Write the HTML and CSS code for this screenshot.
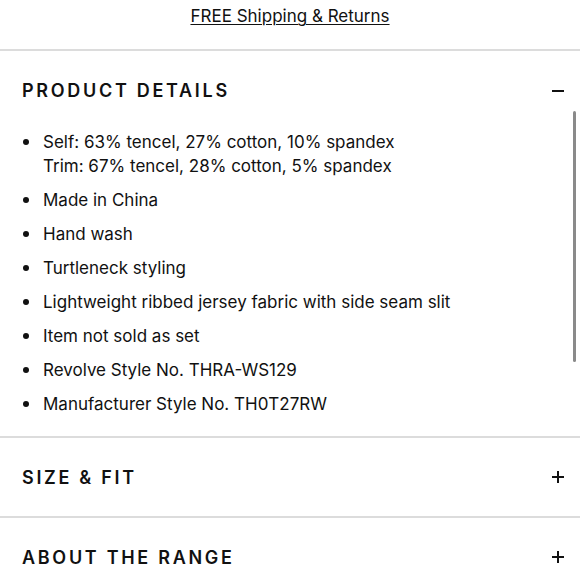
FILE: index.html
```html
<!DOCTYPE html>
<html lang="en">
<head>
  <meta charset="UTF-8" />
  <meta name="viewport" content="width=device-width, initial-scale=1.0" />
  <title>Product Details</title>
  <link rel="stylesheet" href="styles.css">
</head>
<body>

<div class="shipping">
  <a href="#">FREE Shipping &amp; Returns</a>
</div>

<section class="panel open">
  <div class="panel-head">
    <h2>PRODUCT DETAILS</h2>
    <span class="toggle minus"></span>
  </div>
  <ul class="details">
    <li>Self: 63% tencel, 27% cotton, 10% spandex<br>Trim: 67% tencel, 28% cotton, 5% spandex</li>
    <li>Made in China</li>
    <li>Hand wash</li>
    <li>Turtleneck styling</li>
    <li>Lightweight ribbed jersey fabric with side seam slit</li>
    <li>Item not sold as set</li>
    <li>Revolve Style No. THRA-WS129</li>
    <li>Manufacturer Style No. TH0T27RW</li>
  </ul>
  <div class="scroll-thumb"></div>
</section>

<section class="panel">
  <div class="panel-head">
    <h2>SIZE &amp; FIT</h2>
    <span class="toggle plus"></span>
  </div>
</section>

<section class="panel">
  <div class="panel-head">
    <h2>ABOUT THE RANGE</h2>
    <span class="toggle plus"></span>
  </div>
</section>

</body>
</html>
```

FILE: styles.css
```css
body { margin: 0; background: #fff; color: #111; font-family: Inter, "Noto Sans", sans-serif; overflow: hidden; }

.shipping { height: 49px; text-align: center; border-bottom: 2px solid #dcdcdc; }
.shipping a { display: inline-block; margin-top: 5px; font-size: 17px; line-height: 22px; color: #111; text-decoration: underline; text-underline-offset: 2px; text-decoration-thickness: 1px; }

.panel { position: relative; border-bottom: 2px solid #dcdcdc; padding: 0 16px 0 22px; }
.panel-head { height: 78px; display: flex; align-items: center; justify-content: space-between; }
.panel-head h2 { margin: 0; font-size: 18px; font-weight: 600; letter-spacing: 2.7px; color: #111; }
.open .panel-head { height: 79px; }

.toggle { position: relative; width: 12px; height: 12px; }
.toggle::before { content: ""; position: absolute; left: 0; top: 5px; width: 12px; height: 2px; background: #111; }
.toggle.plus::after { content: ""; position: absolute; left: 5px; top: 0; width: 2px; height: 12px; background: #111; }

.details { list-style: none; margin: 0; padding: 0 0 20px 21px; font-size: 17px; line-height: 24px; }
.details li { position: relative; margin-bottom: 10px; }
.details li:last-child { margin-bottom: 0; }
.details li::before { content: ""; position: absolute; left: -20px; top: 9px; width: 6px; height: 6px; border-radius: 50%; background: #111; }

.scroll-thumb { position: absolute; right: 4px; top: 60px; width: 3px; height: 251px; border-radius: 2px; background: #8a8a8a; }
```
